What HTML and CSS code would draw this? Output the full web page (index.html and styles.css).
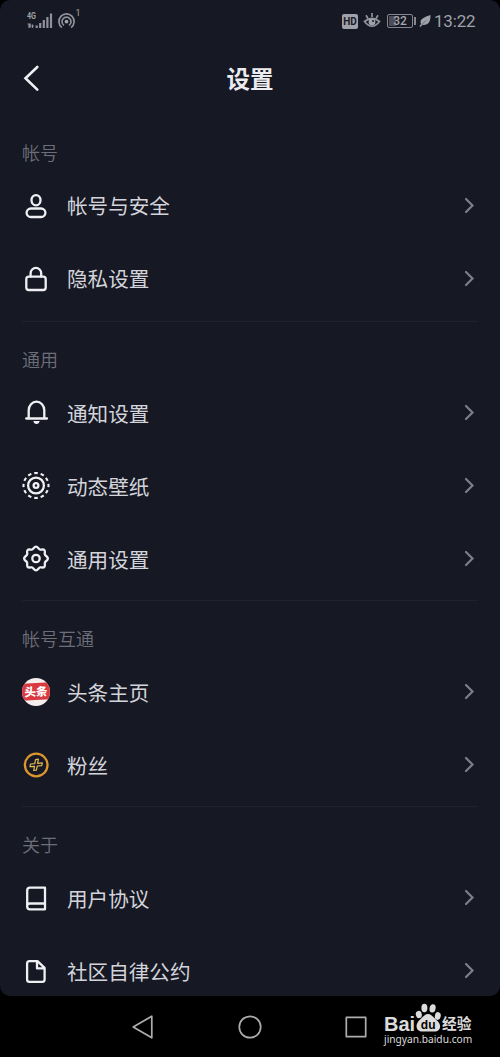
FILE: index.html
```html
<!DOCTYPE html>
<html lang="zh-CN">
<head>
  <meta charset="UTF-8" />
  <title>设置</title>
  <link rel="stylesheet" href="styles.css">
</head>
<body>
  <svg class="defs" width="0" height="0">
    <symbol id="arrow" viewBox="0 0 12 18"><path d="M3 2 L9.5 8.5 L3 15" /></symbol>
  </svg>

  <div class="screen">
    <div class="status-bar">
      <svg class="signal" width="56" height="28" viewBox="0 0 56 28">
        <text class="net" x="1" y="12" textLength="9" lengthAdjust="spacingAndGlyphs">4G</text>
        <path d="M1.5 17H4.2V20.5M3 17V21M6.4 17.5V21M5.5 19H8" stroke-width="1.2" />
        <path d="M10.7 18.5V21M14.2 16V21M17.8 13V21M21.4 10V21M25 6.5V21" stroke-width="2.2" />
        <circle class="fill" cx="40.5" cy="14.6" r="1.9" />
        <path d="M38 18.4A4.5 4.5 0 1 1 43 18.4M35.9 20.6A7.6 7.6 0 1 1 45.1 20.6" stroke-width="1.7" />
        <text class="one" x="49.5" y="8.5">1</text>
      </svg>
      <div class="status-right">
        <span class="hd">HD</span>
        <svg class="eye" width="18" height="18" viewBox="0 0 18 18">
          <path d="M1.5 9.5Q9 3.5 16.5 9.5Q9 19 1.5 9.5ZM9 1V5M3 3.2L4.8 6.2M15 3.2L13.2 6.2" stroke-width="1.7" />
          <circle class="fill" cx="9" cy="10" r="3.4" />
          <circle class="pupil" cx="10" cy="9" r="1" />
        </svg>
        <span class="battery"><span class="level"></span><b>32</b></span>
        <svg class="leaf" width="12" height="14" viewBox="0 0 12 14">
          <path class="fill" d="M11.5 1C11.5 7 10 11.5 3.5 11L1.3 13L0.4 12.2L2 10C0 5 5.5 3 11.5 1Z" />
          <path d="M2.5 11L7 6.5" class="vein" />
        </svg>
        <span class="time">13:22</span>
      </div>
    </div>

    <div class="header">
      <svg class="back" width="20" height="30" viewBox="0 0 20 30"><path d="M15.3 4L3.5 15.3L15.3 26.6" /></svg>
      <h1>设置</h1>
    </div>

    <div class="section first">
      <h2>帐号</h2>
      <div class="row">
        <svg class="icon" viewBox="0 0 28 28"><ellipse cx="14" cy="8.2" rx="4.5" ry="5.1" /><rect x="4.6" y="16.5" width="18.8" height="8.5" rx="4.25" /></svg>
        <span>帐号与安全</span>
        <svg class="arrow"><use href="#arrow" /></svg>
      </div>
      <div class="row">
        <svg class="icon" viewBox="0 0 28 28"><rect x="4.3" y="11.7" width="19.4" height="13.3" rx="2.5" /><path d="M8.6 11.5V8.2A5.3 5.3 0 0 1 19.2 8.2V11.5" /></svg>
        <span>隐私设置</span>
        <svg class="arrow"><use href="#arrow" /></svg>
      </div>
    </div>

    <div class="section">
      <h2>通用</h2>
      <div class="row">
        <svg class="icon" viewBox="0 0 28 28"><path d="M4.2 19.5H25M6.7 19.3V11.3A7.8 8.6 0 0 1 22.3 11.3V19.3" /><path class="solid" d="M11.3 22H17.7Q17 25 14.5 25Q12 25 11.3 22Z" /></svg>
        <span>通知设置</span>
        <svg class="arrow"><use href="#arrow" /></svg>
      </div>
      <div class="row">
        <svg class="icon" viewBox="0 0 28 28"><circle cx="14" cy="13.5" r="2.4" /><circle cx="14" cy="13.5" r="7.9" /><circle class="dashed" cx="14" cy="13.5" r="12.5" pathLength="120" /></svg>
        <span>动态壁纸</span>
        <svg class="arrow"><use href="#arrow" /></svg>
      </div>
      <div class="row">
        <svg class="icon gear" viewBox="0 0.5 28 28"><path d="M14 2.1C16 2.1 16.7 5.2 18.2 5.2C19.7 5.2 21.4 4.5 22.4 5.6C23.5 6.6 22.5 8.5 22.8 9.8C23.1 11.3 25.9 12 25.9 14C25.9 16 23.1 16.7 22.8 18.2C22.5 19.5 23.5 21.4 22.4 22.4C21.4 23.5 19.7 22.8 18.2 22.8C16.7 22.8 16 25.9 14 25.9C12 25.9 11.3 22.8 9.8 22.8C8.3 22.8 6.6 23.5 5.6 22.4C4.5 21.4 5.5 19.5 5.2 18.2C4.9 16.7 2.1 16 2.1 14C2.1 12 4.9 11.3 5.2 9.8C5.5 8.5 4.5 6.6 5.6 5.6C6.6 4.5 8.3 5.2 9.8 5.2C11.3 5.2 12 2.1 14 2.1Z" /><circle cx="14" cy="14" r="3.7" /></svg>
        <span>通用设置</span>
        <svg class="arrow"><use href="#arrow" /></svg>
      </div>
    </div>

    <div class="section">
      <h2>帐号互通</h2>
      <div class="row">
        <div class="icon toutiao"><b>头条</b></div>
        <span>头条主页</span>
        <svg class="arrow"><use href="#arrow" /></svg>
      </div>
      <div class="row">
        <svg class="icon fans" viewBox="0 0 28 28"><circle cx="14.2" cy="14" r="11.3" /><path class="plus" d="M13.5 8.6L16.4 8.2L15.6 12.3L20.3 11.9L19.8 14.6L15.3 15L14.4 19.2L11.7 19.5L12.5 15.3L8 15.7L8.5 13L12.8 12.6Z" /></svg>
        <span>粉丝</span>
        <svg class="arrow"><use href="#arrow" /></svg>
      </div>
    </div>

    <div class="section">
      <h2>关于</h2>
      <div class="row">
        <svg class="icon" viewBox="0 0 28 28"><path d="M8 3.7H23V25.3H8Q5.2 25.3 5.2 22.5V6.5Q5.2 3.7 8 3.7ZM5.2 21.5Q5.4 19.5 8 19.5H23" /></svg>
        <span>用户协议</span>
        <svg class="arrow"><use href="#arrow" /></svg>
      </div>
      <div class="row">
        <svg class="icon" viewBox="0 0 28 28"><path d="M7.5 4.2H15.5L22.6 10.9V22.4Q22.6 24.8 20.2 24.8H7.5Q5.1 24.8 5.1 22.4V6.6Q5.1 4.2 7.5 4.2ZM15 4.4V11.4H22.5" /></svg>
        <span>社区自律公约</span>
        <svg class="arrow"><use href="#arrow" /></svg>
      </div>
    </div>
  </div>

  <div class="nav-bar">
    <svg width="24" height="26" viewBox="0 0 24 26"><path d="M20.8 2.2V23.8L2.2 13Z" /></svg>
    <svg width="24" height="26" viewBox="0 0 24 26"><circle cx="12" cy="13" r="10.7" /></svg>
    <svg width="24" height="26" viewBox="0 0 24 26"><rect x="1.3" y="3.4" width="19.4" height="19.2" /></svg>
    <div class="watermark">
      <div class="brand">
        <span class="bai">Bai</span>
        <svg class="paw" width="27" height="29" viewBox="0 0 27 29">
          <ellipse cx="3.8" cy="11.5" rx="3" ry="3.7" transform="rotate(-12 3.8 11.5)" />
          <ellipse cx="9.4" cy="5" rx="3" ry="4.2" />
          <ellipse cx="17.6" cy="5.4" rx="3" ry="4.2" transform="rotate(12 17.6 5.4)" />
          <ellipse cx="22.8" cy="13" rx="2.9" ry="3.9" transform="rotate(12 22.8 13)" />
          <path d="M13 11C16.5 11 18 14 22 17.5C27.5 22.5 25 28.5 20 28.5H7C1.5 28.5 -0.5 22.5 4 17.5C8 14 9.500 11 13 11Z" />
          <text x="13.2" y="26.3" text-anchor="middle">du</text>
        </svg>
        <span class="jy">经验</span>
      </div>
      <div class="site">jingyan.baidu.com</div>
    </div>
  </div>
</body>
</html>
```
FILE: styles.css
```css
body {
  margin: 0;
  background: #000;
  color: #d3d4da;
  font-family: "Noto Sans CJK SC", sans-serif;
}

svg {
  fill: none;
  flex: none;
}

.defs {
  display: block;
  height: 0;
}

.screen {
  height: 996px;
  background: #161824;
  border-radius: 10px;
  overflow: hidden;
}

/* status bar */
.status-bar {
  height: 42px;
  box-sizing: border-box;
  padding: 7px 24px 0 26px;
  display: flex;
  justify-content: space-between;
}

.signal, .eye {
  stroke: #90919a;
}

.status-bar .fill {
  fill: #a0a1a9;
  stroke: none;
}

.signal text {
  fill: #a0a1a9;
  stroke: none;
  font-family: Roboto, sans-serif;
}

.net {
  font-size: 9px;
  font-weight: 700;
}

.one {
  font-size: 9px;
}

.status-right {
  height: 28px;
  display: flex;
  align-items: center;
}

.hd {
  width: 16px;
  height: 15px;
  border-radius: 2px;
  background: #a0a1a9;
  color: #161824;
  font: 700 10px/15px Roboto, sans-serif;
  text-align: center;
}

.eye {
  margin-left: 5px;
}

.pupil {
  fill: #161824;
  stroke: none;
}

.battery {
  position: relative;
  width: 24px;
  height: 12px;
  margin: 0 6px 0 6px;
  border: 1px solid #85868f;
  border-radius: 2px;
  color: #a5a6ae;
  font: 12px/12px Roboto, sans-serif;
  text-align: center;
}

.battery b {
  position: relative;
  font-weight: 500;
}

.battery::after {
  content: "";
  position: absolute;
  right: -4px;
  top: 2px;
  width: 2px;
  height: 8px;
  background: #85868f;
}

.level {
  position: absolute;
  left: 1px;
  top: 1px;
  width: 7px;
  height: 10px;
  background: #4c4d58;
}

.vein {
  stroke: #161824;
  stroke-width: 0.4;
}

.time {
  width: 42px;
  margin-left: 3px;
  color: #a0a1a9;
  font: 17px/28px Roboto, sans-serif;
  letter-spacing: -0.2px;
  white-space: nowrap;
}

/* title */
.header {
  height: 72px;
  display: grid;
  grid-template-columns: 60px 1fr 60px;
  align-items: center;
}

.back {
  margin-left: 22px;
  stroke: #f0f0f4;
  stroke-width: 2.6;
  stroke-linecap: round;
}

h1 {
  margin: 0;
  font-size: 23.5px;
  font-weight: 700;
  line-height: 36px;
  text-align: center;
  color: #ececf0;
}

/* settings list */
.section {
  margin: 0 22px;
  border-top: 1px solid #1f212d;
  padding: 20px 0 5px;
}

.first {
  border-top-color: transparent;
  padding-bottom: 6px;
}

h2 {
  margin: 0;
  font-size: 18px;
  font-weight: 350;
  line-height: 34px;
  color: #6c6e79;
}

.row {
  height: 73px;
  display: flex;
  align-items: center;
}

.row span {
  flex: 1;
  margin-left: 17px;
  font-size: 20.6px;
  line-height: 30px;
}

.first span {
  padding-bottom: 1px;
  line-height: 31px;
}

.icon {
  width: 28px;
  height: 28px;
  stroke: #f0f0f4;
  stroke-width: 2.3;
  stroke-linecap: round;
  stroke-linejoin: round;
}

.solid {
  fill: #f0f0f4;
  stroke: none;
}

.dashed {
  stroke-width: 2.1;
  stroke-linecap: butt;
  stroke-dasharray: 5.5 4.5;
  stroke-dashoffset: 2.75;
}

.arrow {
  width: 12px;
  height: 18px;
  margin-right: 3px;
  stroke: #7d7e89;
  stroke-width: 2.2;
  stroke-linecap: round;
}

.toutiao {
  border-radius: 50%;
  overflow: hidden;
  display: flex;
  align-items: center;
  background: #f5eeee;
}

.toutiao b {
  width: 28px;
  height: 17px;
  background: #d93a42;
  color: #fff;
  font-size: 11.5px;
  font-weight: 900;
  line-height: 16px;
  text-align: center;
  transform: skewY(-3deg);
}

.fans {
  stroke: #dd962e;
}

.plus {
  stroke: #e5b653;
  stroke-width: 1.2;
}

/* system navigation */
.nav-bar {
  height: 61px;
  padding-left: 131px;
  display: flex;
  align-items: center;
  gap: 83px;
}

.nav-bar > svg {
  stroke: #adadad;
  stroke-width: 1.7;
  stroke-linejoin: round;
}

.nav-bar > svg:nth-child(3) {
  margin-right: -68px;
}

.watermark {
  width: 92px;
  height: 47px;
  color: #dcdcdc;
}

.brand {
  height: 29px;
  display: flex;
  align-items: flex-end;
}

.bai {
  width: 31px;
  font: 700 20px/16px "Liberation Sans", sans-serif;
}

.paw {
  fill: #dcdcdc;
}

.paw text {
  fill: #000;
  font: 700 12px "Liberation Sans", sans-serif;
}

.jy {
  font: 700 14.7px/16px "Liberation Sans", "Noto Sans CJK SC", sans-serif;
  white-space: nowrap;
}

.site {
  font: 10.2px/14px "Noto Sans", sans-serif;
}
```
